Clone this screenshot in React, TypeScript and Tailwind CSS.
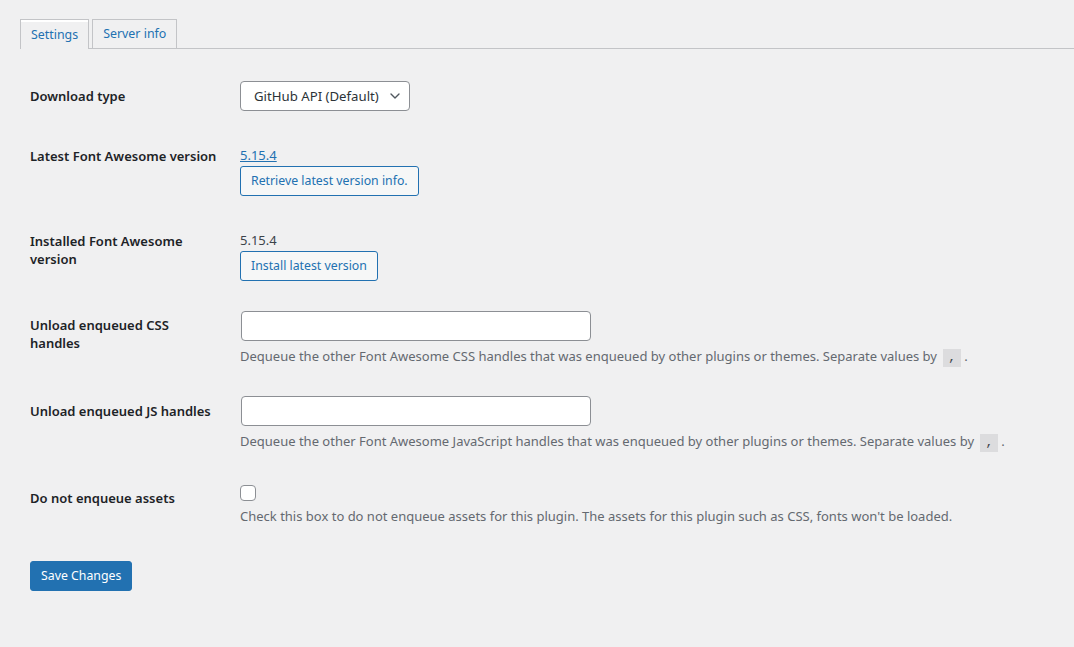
import { ChevronDown } from "lucide-react";

const font = "font-['Segoe_UI','Noto_Sans',sans-serif]";

function Row({
  label,
  children,
  className = "",
}: {
  label: React.ReactNode;
  children: React.ReactNode;
  className?: string;
}) {
  return (
    <div className={`flex ${className}`}>
      <div className="w-[210px] shrink-0 pr-2.5 text-[13px] font-semibold leading-[18px] text-[#1d2327]">
        {label}
      </div>
      <div className="flex-1">{children}</div>
    </div>
  );
}

function Code() {
  return (
    <code className="mx-[3px] inline-block bg-[#dcdcde] px-[5px] text-[13px] leading-[18px] text-[#3c434a]">
      ,
    </code>
  );
}

export default function App() {
  return (
    <div className={`min-h-[647px] w-full bg-[#f0f0f1] ${font} text-[13px] text-[#3c434a]`}>
      <div className="pl-5 pt-[19px]">
        {/* tabs */}
        <div className="flex items-end gap-[3px] border-b border-[#c3c4c7]">
          <button className="-mb-px h-[30px] border border-b-0 border-[#c3c4c7] bg-[#f0f0f1] px-2.5 text-[12.4px] leading-[28px] text-[#2271b1] shadow-[inset_0_2px_0_#fff]">
            Settings
          </button>
          <button className="h-[29px] border border-b-0 border-[#c3c4c7] bg-[#f0f0f1] px-2.5 text-[12.4px] leading-[28px] text-[#2271b1]">
            Server info
          </button>
        </div>

        <div className="pl-2.5">
          <Row label={<div className="pt-[38px]">Download type</div>}>
            <div className="pt-[32px]">
              <div className="inline-flex h-[30px] items-center rounded-[4px] border border-[#8c8f94] bg-white pl-[13px] pr-[6px] text-[13.2px] leading-[28px] text-[#2c3338]">
                <span>GitHub API (Default)</span>
                <ChevronDown className="ml-[8px] size-[16px] text-[#50575e]" strokeWidth={2} />
              </div>
            </div>
          </Row>

          <Row label={<div className="pt-[36px]">Latest Font Awesome version</div>}>
            <div className="pt-[35px]">
              <a href="#" className="block text-[13px] leading-[18px] text-[#2271b1] underline">
                5.15.4
              </a>
              <button className="mt-[2px] block h-[30px] rounded-[3px] border border-[#2271b1] bg-[#f6f7f7] px-[10px] text-[12.3px] leading-[28px] text-[#2271b1]">
                Retrieve latest version info.
              </button>
            </div>
          </Row>

          <Row label={<div className="pt-[36px]">Installed Font Awesome<br />version</div>}>
            <div className="pt-[35px]">
              <div className="text-[13px] leading-[18px] text-[#3c434a]">5.15.4</div>
              <button className="mt-[2px] block h-[30px] rounded-[3px] border border-[#2271b1] bg-[#f6f7f7] px-[10px] text-[12.3px] leading-[28px] text-[#2271b1]">
                Install latest version
              </button>
            </div>
          </Row>

          <Row label={<div className="pt-[35px]">Unload enqueued CSS<br />handles</div>}>
            <div className="pt-[30px]">
              <input className="ml-px block h-[30px] w-[350px] rounded-[4px] border border-[#8c8f94] bg-white" />
              <p className="mt-[6px] leading-[18px] text-[#646970]">
                Dequeue the other Font Awesome CSS handles that was enqueued by other plugins or themes. Separate values by <Code />.
              </p>
            </div>
          </Row>

          <Row label={<div className="pt-[35px]">Unload enqueued JS handles</div>}>
            <div className="pt-[29px]">
              <input className="ml-px block h-[30px] w-[350px] rounded-[4px] border border-[#8c8f94] bg-white" />
              <p className="mt-[6px] leading-[18px] text-[#646970]">
                Dequeue the other Font Awesome JavaScript handles that was enqueued by other plugins or themes. Separate values by <Code />.
              </p>
            </div>
          </Row>

          <Row label={<div className="pt-[37px]">Do not enqueue assets</div>}>
            <div className="pt-[33px]">
              <span className="block size-4 rounded-[4px] border border-[#8c8f94] bg-white" />
              <p className="mt-[6px] leading-[18px] text-[#646970]">
                Check this box to do not enqueue assets for this plugin. The assets for this plugin such as CSS, fonts won't be loaded.
              </p>
            </div>
          </Row>

          <button className="mt-[36px] block h-[30px] rounded-[3px] border border-[#2271b1] bg-[#2271b1] px-[10px] text-[12.3px] leading-[28px] text-white">
            Save Changes
          </button>
        </div>
      </div>
    </div>
  );
}
